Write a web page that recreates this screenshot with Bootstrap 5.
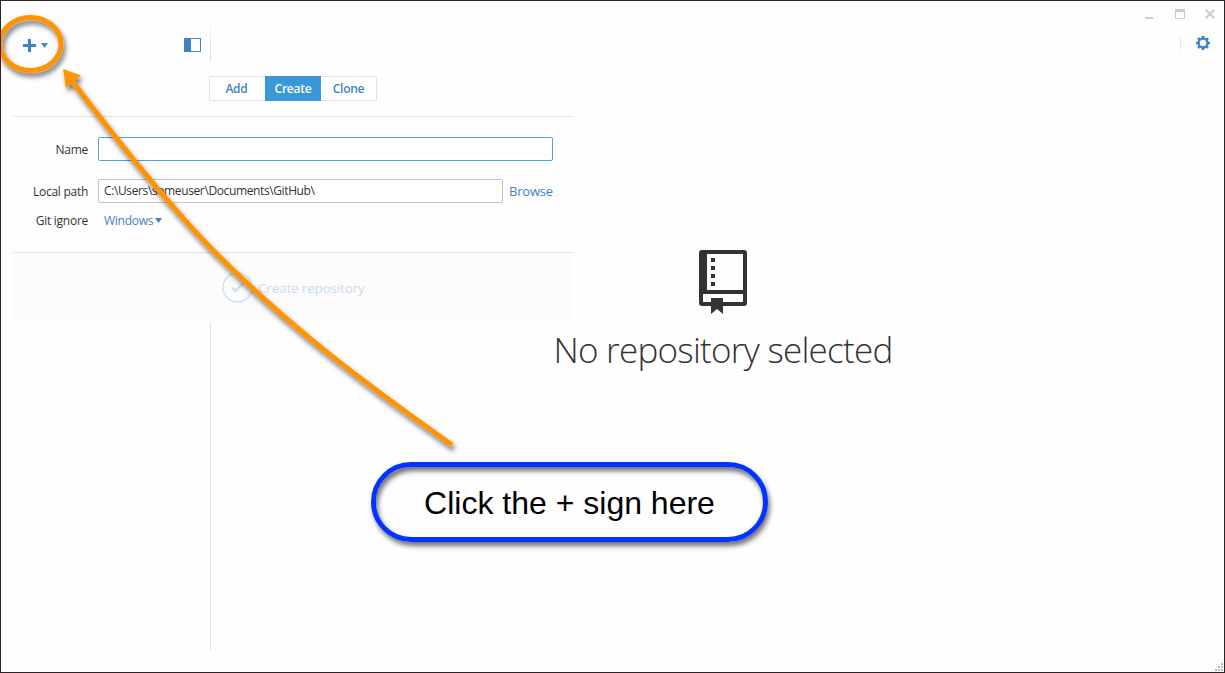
<!DOCTYPE html>
<html lang="en">
<head>
<meta charset="utf-8">
<title>GitHub</title>
<meta name="viewport" content="width=device-width, initial-scale=1">
<link href="https://cdn.jsdelivr.net/npm/bootstrap@5.3.0/dist/css/bootstrap.min.css" rel="stylesheet">
<style>
  body { font-family: "Open Sans", "Noto Sans", sans-serif; font-size: 12px; line-height: 18px; color: #333; background: #fefefe; }
  svg { display: block; }
  .app-window { height: 673px; border: 1px solid #2c2427; background: #fefefe; }
  .blue { color: #4183c4; }
  .side { width: 210px; padding: 23px 0 22px; }
  .side-tools { height: 41px; padding: 0 9px 0 22px; }
  .side-line { width: 1px; background: linear-gradient(#f8f8f8, #e2e2e2 20px, #e2e2e2); }
  .win-controls { height: 26px; gap: 20px; padding-right: 9px; }
  .main-tools { height: 28px; margin-top: 2px; padding-right: 14px; gap: 15px; }
  .tool-line { width: 1px; height: 18px; background: linear-gradient(#fafafa, #ddd, #fafafa); }
  .blank { padding: 193px 0 0 11px; }
  .blank h1 { font-size: 35px; line-height: 48px; font-weight: 300; letter-spacing: -.74px; margin: 12px 0 0; white-space: nowrap; color: #333; }
  .panel { left: 12px; top: 61px; width: 560px; height: 260px; background: #fefefe; z-index: 2; }
  .panel-tabs { height: 55px; padding-top: 14px; border-bottom: 1px solid #e2e2e2; }
  .panel-tabs .btn-group { width: 168px; }
  .panel-tabs .btn { flex: 0 0 56px; height: 25px; padding: 0; margin: 0; font-size: 12px; line-height: 23px; font-weight: 600; letter-spacing: -.25px; color: #4183c4; background: #fff; border: 1px solid #e2e2e2; border-radius: 2px; }
  .panel-tabs .btn-group > .btn:not(:first-child) { margin-left: 0; }
  .panel-tabs .btn:first-child { border-right: 0; padding-right: 2px; }
  .panel-tabs .btn:last-child { border-left: 0; }
  .panel-tabs .btn.active { color: #fff; background: #3998d6; border-color: #3998d6; }
  .panel-form { height: 136px; padding: 20px 20px 0 0; border-bottom: 1px solid #e2e2e2; }
  .field-label { width: 75px; margin-right: 10px; padding-top: 1px; text-align: right; white-space: nowrap; letter-spacing: -.27px; }
  .panel-form .form-control { height: 24px; padding: 0 5px; font: inherit; line-height: 22px; color: #333; border: 1px solid #c4c4c4; border-radius: 2px; background: #fff; }
  .panel-form .form-control.current { border-color: #4ba3e3; }
  .path-row { margin-top: 18px; }
  .path-text { letter-spacing: -.38px; }
  .browse { font-size: 13px; margin-left: 6px; letter-spacing: -.17px; }
  .ignore-row { margin-top: 8px; }
  .win-link { margin: 1px 2px 0 6px; letter-spacing: -.25px; }
  .panel-foot { height: 69px; background: #fcfcfc; color: #c9dbed; font-size: 13.5px; padding-left: 209px; gap: 5px; }
  .create-text { letter-spacing: -.17px; }
  .notes { left: -1px; top: -1px; z-index: 3; pointer-events: none; }
  .callout-pill { left: 370px; top: 461px; width: 397px; height: 80px; border: 5px solid #0433ff; border-radius: 40px; z-index: 3; font: 32px/72px "Liberation Sans", Arial, sans-serif; color: #000; white-space: nowrap; box-shadow: 2px 4px 5px rgba(0,0,0,.55), inset 2px 4px 5px rgba(0,0,0,.55); }
  .grip { right: 1px; bottom: 1px; }
</style>
</head>
<body>
<div class="app-window position-relative d-flex overflow-hidden">
  <aside class="side d-flex flex-shrink-0">
    <div class="side-tools blue d-flex align-items-center justify-content-between flex-fill">
      <svg width="27" height="14" viewBox="0 0 27 14"><path d="M0 6h13v3H0zM5 1h3v13H5zM18 5h7l-3.500 5z" fill="#4183c4"/></svg>
      <svg width="17" height="14" viewBox="0 0 17 14"><rect x=".5" y=".5" width="16" height="13" fill="#fff" stroke="#4183c4"/><path d="M0 0h7v14H0z" fill="#4183c4"/></svg>
    </div>
    <div class="side-line"></div>
  </aside>

  <main class="flex-fill d-flex flex-column">
    <div class="win-controls d-flex align-items-center justify-content-end">
      <svg width="10" height="10" viewBox="0 0 10 10"><path d="M0 8h8v2H0z" fill="#ccc"/></svg>
      <svg width="10" height="10" viewBox="0 0 10 10"><path d="M0 0h10v10H0zM1 3v6h8V3z" fill="#ccc" fill-rule="evenodd"/></svg>
      <svg width="10" height="10" viewBox="0 0 10 10"><path d="M.7.7l8.600 8.600M9.300.7L.7 9.300" stroke="#ccc" stroke-width="2.100"/></svg>
    </div>
    <div class="main-tools d-flex align-items-center justify-content-end">
      <div class="tool-line"></div>
      <svg width="14" height="14" viewBox="-7 -7 14 14" fill="#4183c4">
        <circle r="4.200" fill="none" stroke="#4183c4" stroke-width="2"/>
        <g id="teeth"><path d="M-1.300-7h2.600l.5 2.500h-3.600zM-1.300 7h2.600l.5-2.500h-3.600zM-7-1.300v2.600l2.500.5v-3.600zM7-1.300v2.600l-2.500.5v-3.600z"/></g>
        <use href="#teeth" transform="rotate(45)"/>
      </svg>
    </div>
    <section class="blank d-flex flex-column align-items-center">
      <svg width="48" height="64" viewBox="0 0 48 64"><path fill="#333" fill-rule="evenodd" d="M3 0h42q3 0 3 3v50q0 3-3 3H24v8l-6-5-6 5v-8H3q-3 0-3-3V3q0-3 3-3zM8 4v36h36V4zM4 44v8h8v-4h12v4h20v-8zM12 8h4v4h-4zM12 16h4v4h-4zM12 24h4v4h-4zM12 32h4v4h-4z"/></svg>
      <h1>No repository selected</h1>
    </section>
  </main>

  <section class="panel position-absolute">
    <div class="panel-tabs d-flex justify-content-center">
      <div class="btn-group">
        <button class="btn">Add</button><button class="btn active">Create</button><button class="btn">Clone</button>
      </div>
    </div>
    <div class="panel-form">
      <div class="d-flex align-items-center">
        <label class="field-label flex-shrink-0">Name</label>
        <input class="form-control current" aria-label="Name">
      </div>
      <div class="path-row d-flex align-items-center">
        <label class="field-label flex-shrink-0">Local path</label>
        <div class="form-control"><span class="path-text">C:\Users\someuser\Documents\GitHub\</span></div>
        <span class="browse blue">Browse</span>
      </div>
      <div class="ignore-row d-flex align-items-center">
        <label class="field-label flex-shrink-0">Git ignore</label>
        <span class="blue win-link">Windows</span>
        <svg width="7" height="5" viewBox="0 0 7 5"><path d="M0 0h7L3.500 5z" fill="#4183c4"/></svg>
      </div>
    </div>
    <div class="panel-foot d-flex align-items-center">
      <svg width="31" height="31" viewBox="0 0 31 31" fill="none" stroke="#c9dbed"><circle cx="15.500" cy="15.500" r="14.500" stroke-width="1.200"/><path d="M10 15.500l3.500 3.500 8-8" stroke-width="2.200"/></svg>
      <span class="create-text">Create repository</span>
    </div>
  </section>

  <svg class="grip position-absolute" width="9" height="9" viewBox="0 0 9 9"><path d="M7 1h2v2H7zM4 4h2v2H4zM7 4h2v2H7zM1 7h2v2H1zM4 7h2v2H4zM7 7h2v2H7z" fill="#bbb"/></svg>

  <svg class="notes position-absolute" width="480" height="480" viewBox="0 0 480 480">
    <defs><filter id="soft" x="-10%" y="-10%" width="125%" height="125%"><feDropShadow dx="2" dy="4" stdDeviation="2.500" flood-color="#000" flood-opacity=".55"/></filter></defs>
    <g filter="url(#soft)">
      <ellipse cx="30.500" cy="44" rx="30.500" ry="26.500" fill="none" stroke="#ff9300" stroke-width="5"/>
      <path d="M73 82C116 139 160 194 203 240C286 326 369 386 452 445" fill="none" stroke="#ff9300" stroke-width="5"/>
      <path d="M63 69L81 75.500 66 88z" fill="#ff9300"/>
    </g>
  </svg>
  <div class="callout-pill position-absolute text-center">Click the + sign here</div>
</div>
<script src="https://cdn.jsdelivr.net/npm/bootstrap@5.3.0/dist/js/bootstrap.bundle.min.js"></script>
</body>
</html>
